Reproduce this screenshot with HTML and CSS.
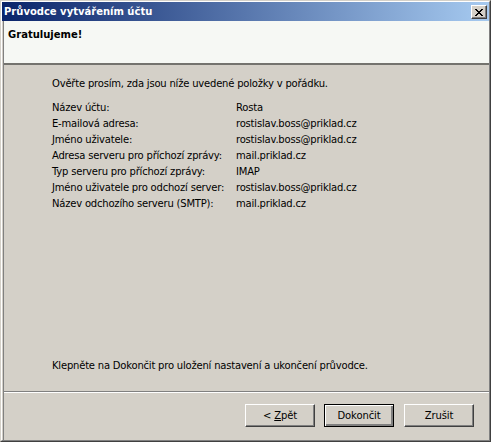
FILE: index.html
```html
<!DOCTYPE html>
<html lang="cs">
<head>
<meta charset="utf-8">
<title>Průvodce vytvářením účtu</title>
<link rel="stylesheet" href="styles.css">
</head>
<body>
<div class="window">
  <div class="frame">
    <div class="titlebar">
      <span class="title">Průvodce vytvářením účtu</span>
      <button class="close" aria-label="Zavřít">
        <svg width="8" height="7" viewBox="0 0 8 7" shape-rendering="crispEdges">
          <path d="M0 0h2v1H0zM6 0h2v1H6zM1 1h2v1H1zM5 1h2v1H5zM2 2h4v1H2zM3 3h2v1H3zM2 4h4v1H2zM1 5h2v1H1zM5 5h2v1H5zM0 6h2v1H0zM6 6h2v1H6z" fill="#000"/>
        </svg>
      </button>
    </div>
    <div class="client">
      <div class="header">
        <div class="heading">Gratulujeme!</div>
      </div>
      <div class="content">
        <p class="intro">Ověřte prosím, zda jsou níže uvedené položky v pořádku.</p>
        <div class="summary">
          <div class="label">Název účtu:</div><div class="value">Rosta</div>
          <div class="label">E-mailová adresa:</div><div class="value">rostislav.boss@priklad.cz</div>
          <div class="label">Jméno uživatele:</div><div class="value">rostislav.boss@priklad.cz</div>
          <div class="label">Adresa serveru pro příchozí zprávy:</div><div class="value">mail.priklad.cz</div>
          <div class="label">Typ serveru pro příchozí zprávy:</div><div class="value">IMAP</div>
          <div class="label">Jméno uživatele pro odchozí server:</div><div class="value">rostislav.boss@priklad.cz</div>
          <div class="label">Název odchozího serveru (SMTP):</div><div class="value">mail.priklad.cz</div>
        </div>
        <p class="note">Klepněte na Dokončit pro uložení nastavení a ukončení průvodce.</p>
      </div>
      <div class="sep"></div>
      <div class="buttons">
        <button class="btn">&lt; <u>Z</u>pět</button>
        <button class="btn btn-default">Dokončit</button>
        <button class="btn btn-cancel">Zrušit</button>
      </div>
    </div>
  </div>
</div>
</body>
</html>
```
FILE: styles.css
```css
* { box-sizing: border-box; }
html, body { margin: 0; padding: 0; }
body {
  width: 491px;
  height: 442px;
  font-family: "DejaVu Sans", Verdana, sans-serif;
  font-size: 10px;
  color: #000;
  background: #d4d0c8;
}
.window {
  width: 491px;
  height: 442px;
  border: 1px solid;
  border-color: #d4d0c8 #404040 #404040 #d4d0c8;
  background: #d4d0c8;
}
.frame {
  height: 100%;
  border: 1px solid;
  border-color: #ffffff #808080 #808080 #ffffff;
  display: flex;
  flex-direction: column;
}
.titlebar {
  height: 19px;
  flex: none;
  display: flex;
  align-items: flex-start;
  padding-left: 2px;
  background: linear-gradient(to right, #0a246a, #a6caf0);
}
.title {
  color: #fff;
  font-weight: bold;
  line-height: 19px;
  white-space: nowrap;
}
.close {
  margin: 3px 2px 0 auto;
  width: 16px;
  height: 14px;
  padding: 0;
  background: #d4d0c8;
  border: 1px solid;
  border-color: #ffffff #404040 #404040 #ffffff;
  box-shadow: inset -1px -1px 0 #808080;
  display: flex;
  align-items: center;
  justify-content: center;
}
.close svg { display: block; }
.client {
  flex: 1;
  display: flex;
  flex-direction: column;
  margin-left: 1px;
  border-left: 1px solid #808080;
}
.header {
  height: 44px;
  flex: none;
  background: #f6f8f4;
  border-bottom: 2px solid #74736e;
  padding: 6px 0 0 4px;
}
.heading {
  font-weight: bold;
  line-height: 16px;
}
.content {
  flex: 1;
  display: flex;
  flex-direction: column;
  padding: 11px 0 17px 48px;
  line-height: 16px;
  letter-spacing: -0.2px;
}
.intro { margin: 0 0 8px 0; }
.summary {
  display: grid;
  grid-template-columns: 184px auto;
}
.label, .value { white-space: nowrap; }
.note { margin: auto 0 0 0; }
.sep {
  flex: none;
  height: 2px;
  border-top: 1px solid #808080;
  border-bottom: 1px solid #ffffff;
}
.buttons {
  flex: none;
  display: flex;
  justify-content: flex-end;
  padding: 11px 15px 13px 0;
}
.btn {
  width: 70px;
  height: 23px;
  padding: 0;
  font-family: inherit;
  font-size: 10px;
  letter-spacing: -0.1px;
  color: #000;
  background: #d4d0c8;
  border: 1px solid;
  border-color: #ffffff #404040 #404040 #ffffff;
  box-shadow: inset -1px -1px 0 #808080;
}
.btn u { text-decoration: underline; }
.btn-default {
  margin-left: 9px;
  border: 1px solid #000;
  box-shadow: inset 1px 1px 0 #ffffff, inset -2px -2px 0 #808080, inset -1px -1px 0 #404040;
}
.btn-cancel { margin-left: 10px; }
```
